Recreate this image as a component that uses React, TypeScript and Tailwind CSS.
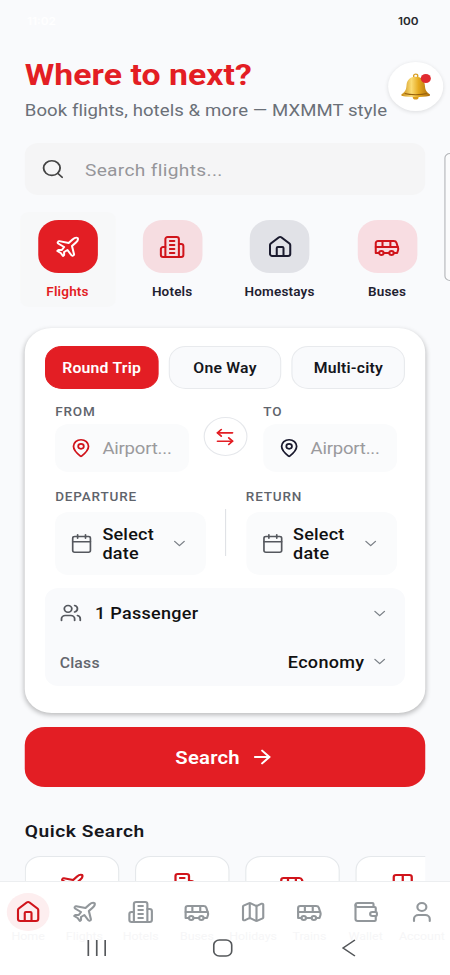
import React, { useState } from "react";
import {
    ArrowLeftRight,
    ArrowRight,
    Bus,
    Calendar,
    ChevronDown,
    House,
    Map,
    MapPin,
    Plane,
    Search,
    User,
    Users,
    Wallet,
} from "lucide-react";

type IconProps = { size?: number; strokeWidth?: number };

const Building = ({ size = 24, strokeWidth = 2 }: IconProps) => (
    <svg
        width={size}
        height={size}
        viewBox="0 0 24 24"
        fill="none"
        stroke="currentColor"
        strokeWidth={strokeWidth}
        strokeLinecap="round"
        strokeLinejoin="round"
    >
        <path d="M6 22V4a2 2 0 0 1 2-2h8a2 2 0 0 1 2 2v18Z" />
        <path d="M6 12H4a2 2 0 0 0-2 2v6a2 2 0 0 0 2 2h2" />
        <path d="M18 9h2a2 2 0 0 1 2 2v9a2 2 0 0 1-2 2h-2" />
        <path d="M10 6h4M10 10h4M10 14h4M10 18h4" />
    </svg>
);

const categories = [
    { label: "Flights", icon: Plane, item: "w-[85px] bg-[#f7f8f9]", tile: "bg-[#e31e24] text-white", text: "text-[#e31e24]" },
    { label: "Hotels", icon: Building, item: "w-[82px]", tile: "bg-[#f6dde1] text-[#d0141b]", text: "text-[#1f2130]" },
    { label: "Homestays", icon: House, item: "w-[90px]", tile: "bg-[#e1e2e7] text-[#1a1a2e]", text: "text-[#1f2130]" },
    { label: "Buses", icon: Bus, item: "w-[82px]", tile: "bg-[#f8dde2] text-[#d0141b]", text: "text-[#1f2130]" },
];

const trips = ["Round Trip", "One Way", "Multi-city"];

const navItems: { label: string; icon: React.ComponentType<IconProps> }[] = [
    { label: "Home", icon: House },
    { label: "Flights", icon: Plane },
    { label: "Hotels", icon: Building },
    { label: "Buses", icon: Bus },
    { label: "Holidays", icon: Map },
    { label: "Trains", icon: Bus },
    { label: "Wallet", icon: Wallet },
    { label: "Account", icon: User },
];

const Bell = () => (
    <svg viewBox="0 0 26 26" className="size-[27px]">
        <defs>
            <linearGradient id="gold" x1="0" x2="1" y1="0" y2="0">
                <stop offset="0" stopColor="#c98a12" />
                <stop offset="0.35" stopColor="#fbdc74" />
                <stop offset="0.6" stopColor="#e6aa1f" />
                <stop offset="1" stopColor="#a8690c" />
            </linearGradient>
        </defs>
        <circle cx="13" cy="3" r="1.8" fill="none" stroke="#d9a02a" strokeWidth="1.2" />
        <circle cx="13" cy="23" r="2.5" fill="#d99a1c" />
        <path
            d="M13 3.6c-4.8 0-7.4 3.2-7.8 7.6-.4 4.6-.8 6.6-4.2 9.2-.6.7-.3 1.6.6 1.7 3 .6 7.4.9 11.4.9s8.4-.3 11.4-.9c.9-.1 1.2-1 .6-1.7-3.4-2.6-3.8-4.6-4.2-9.2-.4-4.4-3-7.6-7.8-7.6z"
            fill="url(#gold)"
        />
        <path d="M3.5 19.8c5 1.5 14 1.5 19 0" fill="none" stroke="#96600d" strokeWidth="1" />
    </svg>
);

const Header = () => (
    <header className="flex pl-[22px] h-[49px]">
        <div className="w-[323px] whitespace-nowrap">
            <h1 className="text-[30px] leading-[26px] tracking-[0.05px] font-bold text-[#e31e24]">Where to next?</h1>
            <p className="mt-[14px] text-[16.5px] leading-[17px] tracking-[0.07px] text-[#6b7078]">
                Book flights, hotels &amp; more — MXMMT style
            </p>
        </div>
        <button className="relative size-[49px] shrink-0 rounded-full bg-white shadow-[0_1px_4px_rgba(0,0,0,0.12)] flex items-center justify-center">
            <Bell />
            <span className="absolute top-[12px] right-[11.5px] size-[9px] rounded-full bg-[#e02a30]" />
        </button>
    </header>
);

const Place = ({ label, color }: { label: string; color: string }) => (
    <div className="w-[118.5px]">
        <p className="text-[12px] leading-[14px] tracking-[0.75px] font-medium text-[#5f646c]">{label}</p>
        <div className="mt-[5px] h-[48px] rounded-xl bg-[#fafbfc] flex items-center gap-[9px] pl-[13px]">
            <MapPin size={20} strokeWidth={1.9} className={color} />
            <span className="pt-[2px] text-[16.5px] tracking-[-0.2px] text-[#9a9a9d]">Airport...</span>
        </div>
    </div>
);

const DateField = ({ label }: { label: string }) => (
    <div className="w-[134px]">
        <p className="text-[12px] leading-[14px] tracking-[0.75px] font-medium text-[#5f646c]">{label}</p>
        <div className="mt-[8px] h-[63px] rounded-xl bg-[#fafbfc] flex items-center pl-[13px] pr-[15px]">
            <Calendar size={21} strokeWidth={1.7} className="text-[#55585e]" />
            <span className="ml-[8px] w-[60px] text-[16px] leading-[19px] tracking-[0.2px] font-medium text-[#111]">
                Select date
            </span>
            <ChevronDown size={17} strokeWidth={1.7} className="ml-auto text-[#7b8087]" />
        </div>
    </div>
);

const SearchCard = () => {
    const [trip, setTrip] = useState("Round Trip");
    return (
        <section className="mx-[22px] mt-[21px] h-[385px] rounded-[24px] bg-white px-[18px] pt-[18px] shadow-[0_2px_5px_rgba(0,0,0,0.26)]">
            <div className="flex gap-[9px]">
                {trips.map((name) => (
                    <button
                        key={name}
                        onClick={() => setTrip(name)}
                        className={`h-[43px] pt-[2px] flex-1 rounded-[15px] border text-[14px] tracking-[0.2px] font-semibold ${
                            trip === name
                                ? "bg-[#e31e24] border-[#e31e24] text-white"
                                : "bg-[#f9fafc] border-[#e8eaed] text-[#15161c]"
                        }`}
                    >
                        {name}
                    </button>
                ))}
            </div>
            <div className="mt-[16px] pl-[9px] pr-[7.5px] flex items-start justify-between">
                <Place label="FROM" color="text-[#d0141b]" />
                <button className="mt-[12px] size-[39px] rounded-full bg-white border border-[#e5e7eb] flex items-center justify-center text-[#e31e24]">
                    <ArrowLeftRight size={20} strokeWidth={1.9} className="-ml-px" />
                </button>
                <Place label="TO" color="text-[#1a1a2e]" />
            </div>
            <div className="mt-[18px] pl-[9px] flex">
                <DateField label="DEPARTURE" />
                <div className="mt-[19px] ml-[17px] mr-[17.5px] h-[47px] w-px shrink-0 bg-[#e0e2e6]" />
                <DateField label="RETURN" />
            </div>
            <div className="mt-[13px] h-[98px] rounded-xl bg-[#f9fafc] px-[13px] pt-px flex flex-col">
                <div className="flex h-[49px] items-center">
                    <Users size={20} strokeWidth={1.9} className="text-[#55585e]" />
                    <span className="ml-[11.5px] pt-px text-[16px] tracking-[0.25px] font-medium text-[#111]">1 Passenger</span>
                    <ChevronDown size={17} strokeWidth={1.7} className="ml-auto mr-px text-[#7b8087]" />
                </div>
                <div className="flex h-[49px] items-center">
                    <span className="pt-[3px] text-[14px] tracking-[0.2px] font-medium text-[#63666d]">Class</span>
                    <span className="ml-auto mr-[5px] pt-[2px] text-[16px] tracking-[0.3px] font-medium text-[#111]">Economy</span>
                    <ChevronDown size={17} strokeWidth={1.7} className="mr-px text-[#7b8087]" />
                </div>
            </div>
        </section>
    );
};

const QuickCard = ({ children }: { children: React.ReactNode }) => (
    <div className="h-[90px] w-[84px] shrink-0 rounded-[14px] border border-[#e5e8eb] bg-white flex justify-center pt-[15px] text-[#d0141b]">
        {children}
    </div>
);

const BottomNav = () => (
    <nav className="h-[94px] shrink-0 bg-white border-t border-[#eceef0] relative">
        <div className="flex pt-[11px]">
            {navItems.map(({ label, icon: Icon }, i) => (
                <div key={label} className="w-[50px] flex flex-col items-center">
                    <div
                        className={`size-[38px] rounded-full flex items-center justify-center ${
                            i === 0 ? "bg-[#fdeeef] text-[#d0141b]" : "text-[#92979b]"
                        }`}
                    >
                        <Icon size={24} strokeWidth={1.9} />
                    </div>
                    <span className="text-[11px] leading-[12px] text-[#f6f6f7]">{label}</span>
                </div>
            ))}
        </div>
        <div className="absolute inset-x-0 top-[57px] px-[77px] flex items-center justify-between text-[#55585b]">
            <svg width="18" height="18" fill="none" stroke="currentColor" strokeWidth="1.5">
                <path d="M1.5 1v16M9 1v16M16.5 1v16" />
            </svg>
            <svg width="18" height="18" fill="none" stroke="currentColor" strokeWidth="1.5" className="mr-[3px]">
                <rect x="1" y="1" width="16" height="16" rx="5" />
            </svg>
            <svg width="14" height="18" fill="none" stroke="currentColor" strokeWidth="1.5" className="mr-[6px]">
                <path d="M12.5 1 2 9l10.5 8" />
            </svg>
        </div>
    </nav>
);

const App = () => {
    return (
        <div className="h-[975px] w-[450px] overflow-hidden bg-[#f9fafc]">
            <div className="relative flex h-full w-[400px] origin-left scale-x-[1.125] flex-col font-['Roboto',sans-serif]">
                <main className="flex-1 overflow-hidden">
                    <div className="flex h-[62px] justify-between pl-[24px] pr-[28px] pt-[15px] text-[10.5px] leading-[14px] font-semibold font-['Inter',sans-serif]">
                        <span className="text-white">11:02</span>
                        <span className="text-[#26282c]">100</span>
                    </div>
                    <Header />
                    <div className="mx-[22px] mt-[32px] h-[52px] rounded-xl bg-[#f5f5f6] flex items-center pl-[14px]">
                        <Search size={22} strokeWidth={1.8} className="text-[#444]" />
                        <span className="ml-[17.5px] pt-[3px] text-[17px] tracking-[0.3px] text-[#96969a]">Search flights...</span>
                    </div>
                    <div className="mt-[17px] ml-[17.5px] flex gap-[9.5px]">
                        {categories.map(({ label, icon: Icon, item, tile, text }) => (
                            <div key={label} className={`h-[95px] pt-[8px] flex flex-col items-center rounded-lg ${item}`}>
                                <div className={`size-[53px] rounded-[18px] flex items-center justify-center ${tile}`}>
                                    <Icon size={24} strokeWidth={1.8} />
                                </div>
                                <span className={`mt-[11px] text-[12px] leading-[16px] tracking-[0.15px] font-semibold ${text}`}>
                                    {label}
                                </span>
                            </div>
                        ))}
                    </div>
                    <SearchCard />
                    <button className="mt-[14px] mx-[22px] h-[60px] w-[356px] rounded-[18px] bg-[#e31e24] flex items-center justify-center gap-[9px] text-white">
                        <span className="text-[18px] tracking-[0.2px] font-semibold">Search</span>
                        <ArrowRight size={22} strokeWidth={2} />
                    </button>
                    <h2 className="mt-[34px] ml-[22px] text-[17px] leading-[20px] tracking-[0.5px] font-semibold text-[#16171c]">
                        Quick Search
                    </h2>
                    <div className="mx-[22px] mt-[15px] flex gap-[14px] overflow-hidden">
                        <QuickCard><Plane size={24} strokeWidth={2} /></QuickCard>
                        <QuickCard><Building size={24} strokeWidth={2} /></QuickCard>
                        <QuickCard><Bus size={24} strokeWidth={2} /></QuickCard>
                        <QuickCard>
                            <svg width="24" height="24" viewBox="0 0 24 24" fill="none" stroke="currentColor" strokeWidth="2">
                                <rect x="4" y="3" width="16" height="18" rx="2" />
                                <path d="M12 3v9M4 12h16" />
                            </svg>
                        </QuickCard>
                    </div>
                </main>
                <BottomNav />
                <div className="absolute top-[153px] -right-[5px] h-[128px] w-[10px] rounded-[5px] border border-[#b4b6b9] bg-[#fbfbfc]" />
            </div>
        </div>
    );
};

export default App;
